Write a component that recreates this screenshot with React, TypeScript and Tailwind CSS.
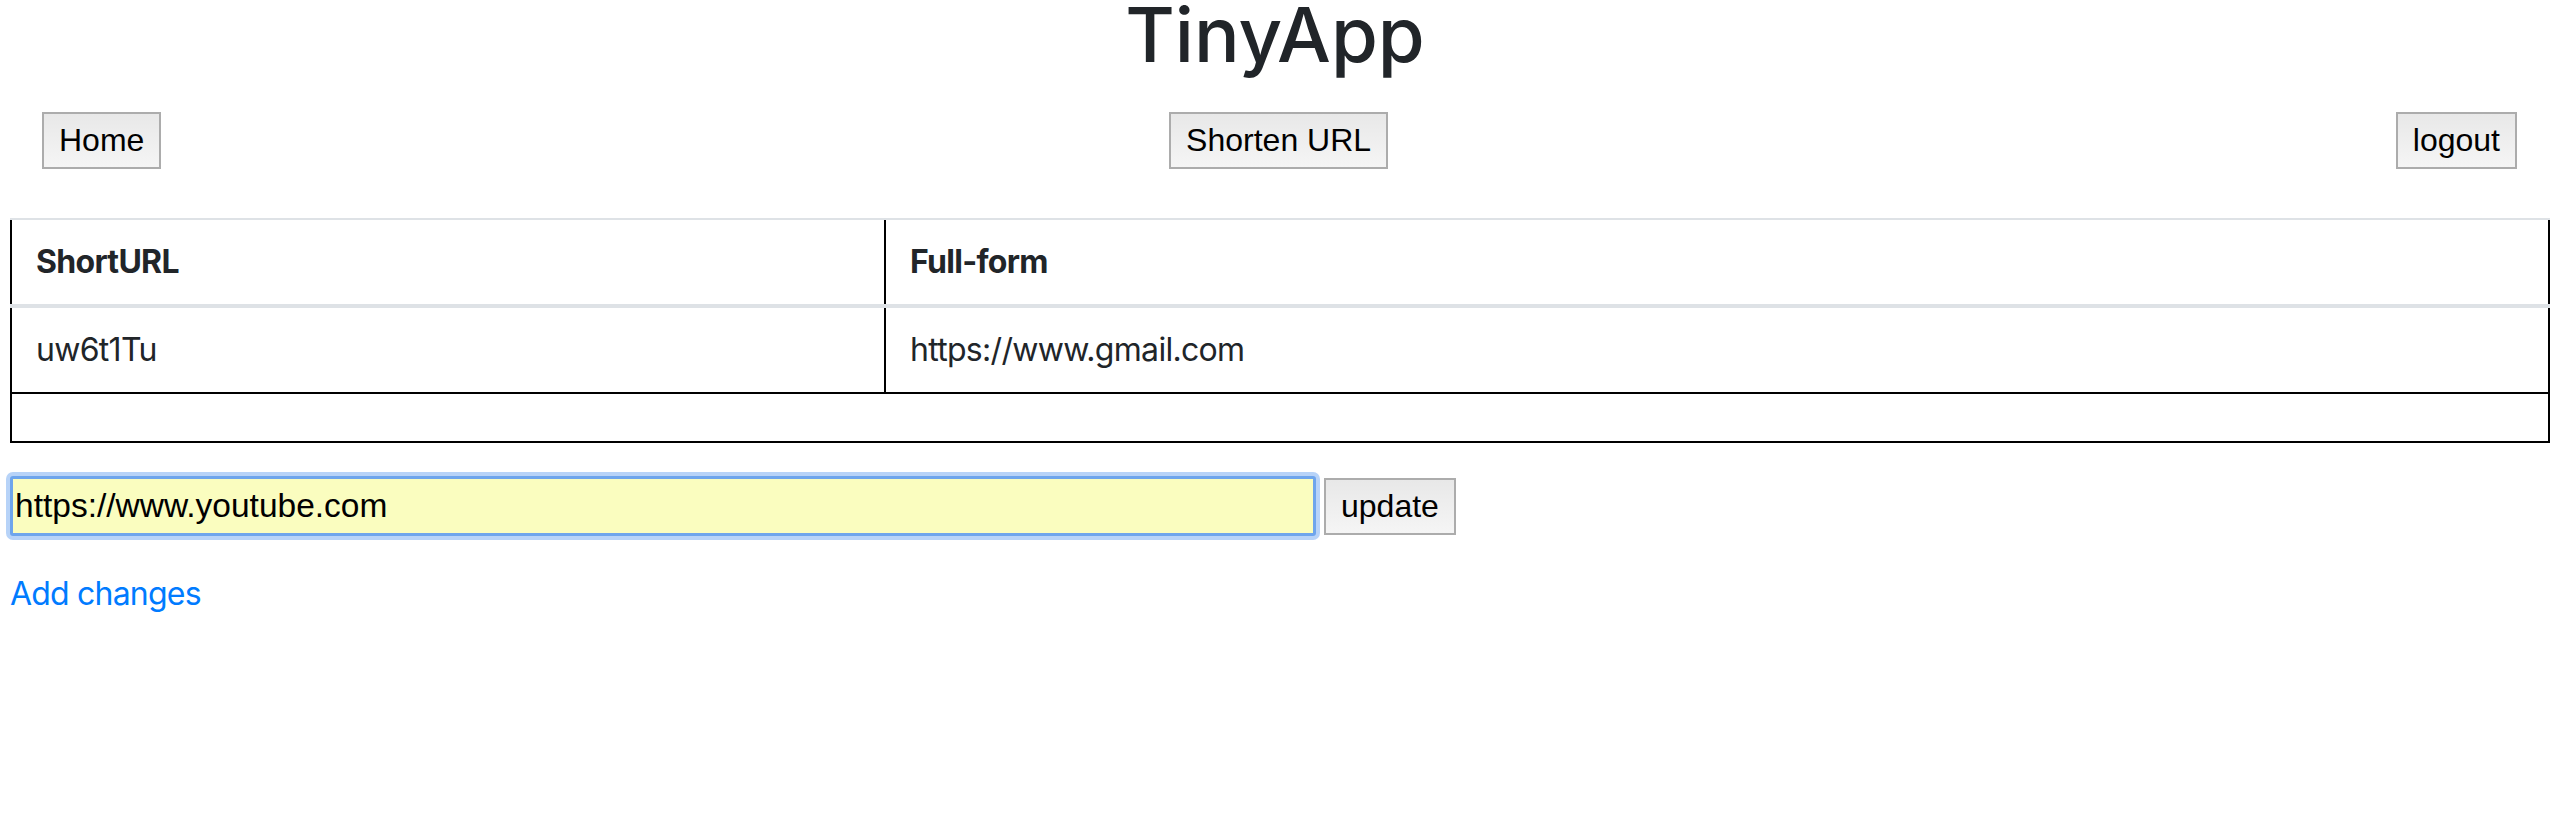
import React, { useState } from 'react';

const btn =
  "border-2 border-[#acacac] bg-gradient-to-b from-[#e8e8e8] to-[#f5f5f5] px-[15px] py-[3px] text-[32px] leading-[47px] text-black font-['Liberation_Sans',Arial,sans-serif]";

const App: React.FC = () => {
  const [url, setUrl] = useState('https://www.youtube.com');

  return (
    <div className="min-h-screen bg-white text-[#212529] font-['Inter',sans-serif]">
      <h1 className="text-center text-[76px] leading-[69px] font-medium">TinyApp</h1>

      <div className="mt-[43px] flex justify-between pl-[42px] pr-[33px]">
        <button className={btn}>Home</button>
        <button className={btn}>Shorten URL</button>
        <button className={btn}>logout</button>
      </div>

      <div className="mt-[49px] pl-[10px]">
        {/* url table */}
        <div className="w-full text-[32px] leading-[48px] tracking-[-0.7px]">
          <div className="flex border-t-2 border-b-4 border-[#dee2e6]">
            <div className="w-[876px] shrink-0 border-x-2 border-black px-[24px] py-[18px] font-bold">ShortURL</div>
            <div className="flex-1 border-r-2 border-black px-[24px] py-[18px] font-bold">Full-form</div>
          </div>
          <div className="flex border-b-2 border-black">
            <div className="w-[876px] shrink-0 border-x-2 border-black px-[24px] py-[18px]">uw6t1Tu</div>
            <div className="flex-1 border-r-2 border-black px-[24px] py-[18px]">https://www.gmail.com</div>
          </div>
          <div className="h-[49px] border-x-2 border-b-2 border-black"></div>
        </div>

        <form className="mt-[33px] flex items-center gap-[8px]" onSubmit={(e) => e.preventDefault()}>
          <input
            type="text"
            value={url}
            onChange={(e) => setUrl(e.target.value)}
            className="h-[60px] w-[1306px] rounded-[3px] border-[3px] border-[#6ea5ec] bg-[#fafdbf] pl-[2px] text-[33.5px] text-black outline-none shadow-[0_0_0_4px_#b7d3f8] font-['Liberation_Sans',Arial,sans-serif]"
          />
          <button type="submit" className={btn}>update</button>
        </form>

        <a href="#" className="mt-[34px] block w-fit text-[32px] leading-[48px] tracking-[-0.8px] text-[#007bff]">Add changes</a>
      </div>
    </div>
  );
};

export default App;
